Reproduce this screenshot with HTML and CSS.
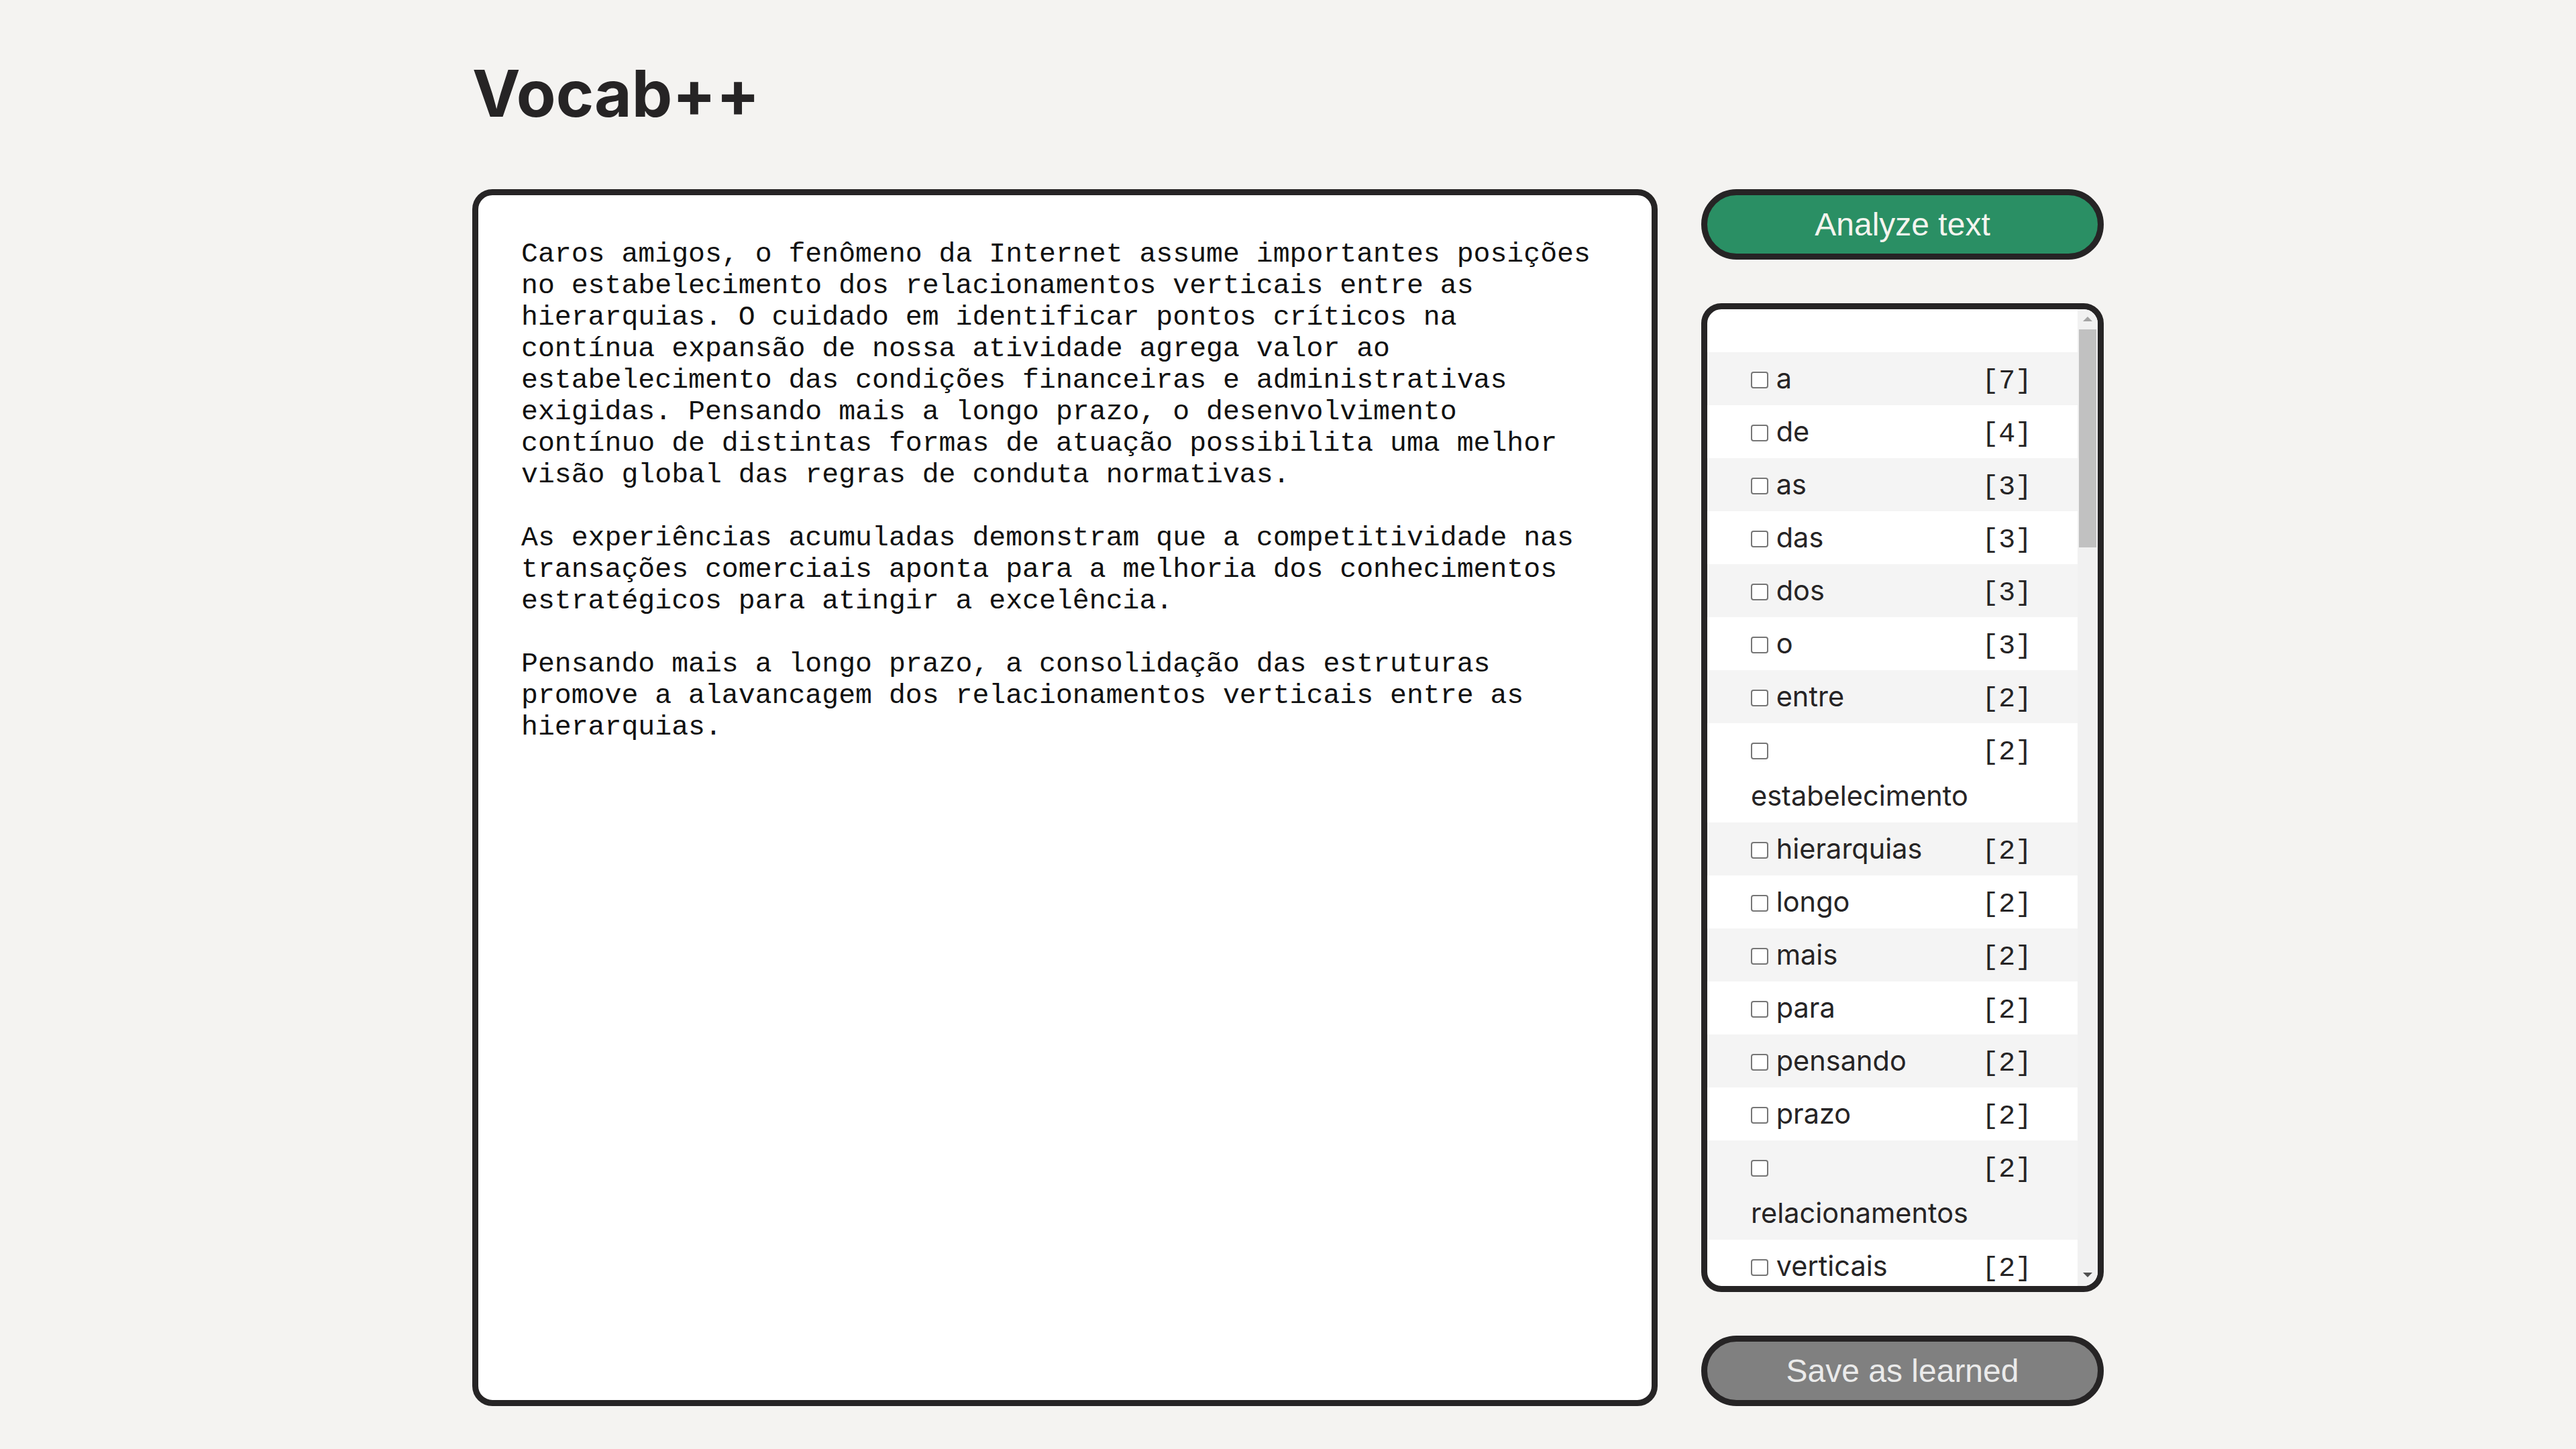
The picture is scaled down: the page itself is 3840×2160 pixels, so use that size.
FILE: index.html
```html
<!DOCTYPE html>
<html lang="pt">
<head>
<meta charset="utf-8">
<title>Vocab++</title>
<link rel="stylesheet" href="styles.css">
</head>
<body>
<div class="app">
  <h1 class="title">Vocab++</h1>
  <main class="workspace">
    <textarea class="editor" spellcheck="false">Caros amigos, o fenômeno da Internet assume importantes posições no estabelecimento dos relacionamentos verticais entre as hierarquias. O cuidado em identificar pontos críticos na contínua expansão de nossa atividade agrega valor ao estabelecimento das condições financeiras e administrativas exigidas. Pensando mais a longo prazo, o desenvolvimento contínuo de distintas formas de atuação possibilita uma melhor visão global das regras de conduta normativas.

As experiências acumuladas demonstram que a competitividade nas transações comerciais aponta para a melhoria dos conhecimentos estratégicos para atingir a excelência.

Pensando mais a longo prazo, a consolidação das estruturas promove a alavancagem dos relacionamentos verticais entre as hierarquias.</textarea>
    <aside class="side">
      <button class="btn btn-analyze" type="button">Analyze text</button>
      <div class="words">
        <div class="word-scroll">
          <ul class="word-list">
            <li class="row"><label class="word"><input class="check" type="checkbox"> a</label><span class="count">[7]</span></li>
            <li class="row"><label class="word"><input class="check" type="checkbox"> de</label><span class="count">[4]</span></li>
            <li class="row"><label class="word"><input class="check" type="checkbox"> as</label><span class="count">[3]</span></li>
            <li class="row"><label class="word"><input class="check" type="checkbox"> das</label><span class="count">[3]</span></li>
            <li class="row"><label class="word"><input class="check" type="checkbox"> dos</label><span class="count">[3]</span></li>
            <li class="row"><label class="word"><input class="check" type="checkbox"> o</label><span class="count">[3]</span></li>
            <li class="row"><label class="word"><input class="check" type="checkbox"> entre</label><span class="count">[2]</span></li>
            <li class="row"><label class="word"><input class="check" type="checkbox"> estabelecimento</label><span class="count">[2]</span></li>
            <li class="row"><label class="word"><input class="check" type="checkbox"> hierarquias</label><span class="count">[2]</span></li>
            <li class="row"><label class="word"><input class="check" type="checkbox"> longo</label><span class="count">[2]</span></li>
            <li class="row"><label class="word"><input class="check" type="checkbox"> mais</label><span class="count">[2]</span></li>
            <li class="row"><label class="word"><input class="check" type="checkbox"> para</label><span class="count">[2]</span></li>
            <li class="row"><label class="word"><input class="check" type="checkbox"> pensando</label><span class="count">[2]</span></li>
            <li class="row"><label class="word"><input class="check" type="checkbox"> prazo</label><span class="count">[2]</span></li>
            <li class="row"><label class="word"><input class="check" type="checkbox"> relacionamentos</label><span class="count">[2]</span></li>
            <li class="row"><label class="word"><input class="check" type="checkbox"> verticais</label><span class="count">[2]</span></li>
            <li class="row"><label class="word"><input class="check" type="checkbox"> acumuladas</label><span class="count">[1]</span></li>
            <li class="row"><label class="word"><input class="check" type="checkbox"> administrativas</label><span class="count">[1]</span></li>
            <li class="row"><label class="word"><input class="check" type="checkbox"> agrega</label><span class="count">[1]</span></li>
            <li class="row"><label class="word"><input class="check" type="checkbox"> alavancagem</label><span class="count">[1]</span></li>
            <li class="row"><label class="word"><input class="check" type="checkbox"> amigos</label><span class="count">[1]</span></li>
            <li class="row"><label class="word"><input class="check" type="checkbox"> ao</label><span class="count">[1]</span></li>
            <li class="row"><label class="word"><input class="check" type="checkbox"> aponta</label><span class="count">[1]</span></li>
            <li class="row"><label class="word"><input class="check" type="checkbox"> assume</label><span class="count">[1]</span></li>
          </ul>
        </div>
        <div class="scrollbar" aria-hidden="true">
          <div class="sb-btn">
            <svg width="30" height="30" viewBox="0 0 30 30"><path d="M8 18H22L15 11Z" fill="#a3a3a3"/></svg>
          </div>
          <div class="sb-track"><div class="sb-thumb"></div></div>
          <div class="sb-btn">
            <svg width="30" height="30" viewBox="0 0 30 30"><path d="M8 10H22L15 17Z" fill="#505050"/></svg>
          </div>
        </div>
      </div>
      <button class="btn btn-save" type="button">Save as learned</button>
    </aside>
  </main>
</div>
</body>
</html>
```

FILE: styles.css
```css
html, body {
  margin: 0;
  padding: 0;
}

body {
  background: #f4f3f1;
  color: #262425;
  font-family: "Inter", "Liberation Sans", sans-serif;
  height: 2160px;
  overflow: hidden;
}

.app {
  width: 2432px;
  margin: 0 auto;
  padding-top: 81px;
}

.title {
  margin: 0 0 85px;
  font-family: "Inter", sans-serif;
  font-weight: 700;
  font-size: 96px;
  line-height: 116px;
  color: #262425;
}

.workspace {
  display: grid;
  grid-template-columns: 1fr 600px;
  column-gap: 65px;
  height: 1814px;
}

.editor {
  box-sizing: border-box;
  width: 100%;
  height: 100%;
  margin: 0;
  border: 9px solid #262425;
  border-radius: 30px;
  background: #ffffff;
  padding: 64px 75px 64px 64px;
  font-family: "Liberation Mono", monospace;
  font-size: 41.5px;
  line-height: normal;
  color: #111111;
  resize: none;
  outline: none;
  overflow: hidden;
}

.side {
  display: flex;
  flex-direction: column;
  gap: 65px;
  min-height: 0;
}

.btn {
  box-sizing: border-box;
  flex: 0 0 105px;
  height: 105px;
  width: 100%;
  margin: 0;
  padding: 0;
  border: 9px solid #262425;
  border-radius: 60px;
  font-family: "Liberation Sans", Arial, sans-serif;
  font-size: 48px;
  line-height: normal;
  cursor: pointer;
}

.btn-analyze {
  background: #2a8f64;
  color: #f4f4ee;
}

.btn-save {
  background: #808080;
  color: #ebebeb;
}

.words {
  flex: 1 1 auto;
  min-height: 0;
  box-sizing: border-box;
  display: flex;
  border: 9px solid #262425;
  border-radius: 30px;
  background: #ffffff;
  overflow: hidden;
}

.word-scroll {
  flex: 1 1 auto;
  min-width: 0;
  overflow: hidden;
}

.scrollbar {
  flex: 0 0 30px;
  display: flex;
  flex-direction: column;
  background: #f1f1f1;
}

.sb-btn {
  flex: 0 0 30px;
  height: 30px;
}

.sb-btn svg {
  display: block;
}

.sb-track {
  flex: 1 1 auto;
  padding: 0 2px;
}

.sb-thumb {
  height: 325px;
  background: #c1c1c1;
}

.word-list {
  list-style: none;
  margin: 0;
  padding: 64px 0 0;
}

.row {
  display: flex;
  align-items: baseline;
  justify-content: space-between;
  padding: 5px 68px 5px 65px;
  font-family: "Inter", sans-serif;
  font-size: 41.5px;
  line-height: 69px;
  color: #262425;
}

.row:nth-child(odd) {
  background: #f4f4f4;
}

.word {
  flex: 1 1 auto;
  min-width: 0;
}

.check {
  appearance: none;
  -webkit-appearance: none;
  box-sizing: border-box;
  display: inline-block;
  width: 26px;
  height: 25px;
  margin: 0;
  border: 2px solid #767676;
  border-radius: 4px;
  background: #ffffff;
  vertical-align: baseline;
}

.count {
  flex: 0 0 auto;
  font-family: "Liberation Mono", monospace;
  font-size: 41.5px;
  line-height: 41.5px;
  color: #262425;
}
```
